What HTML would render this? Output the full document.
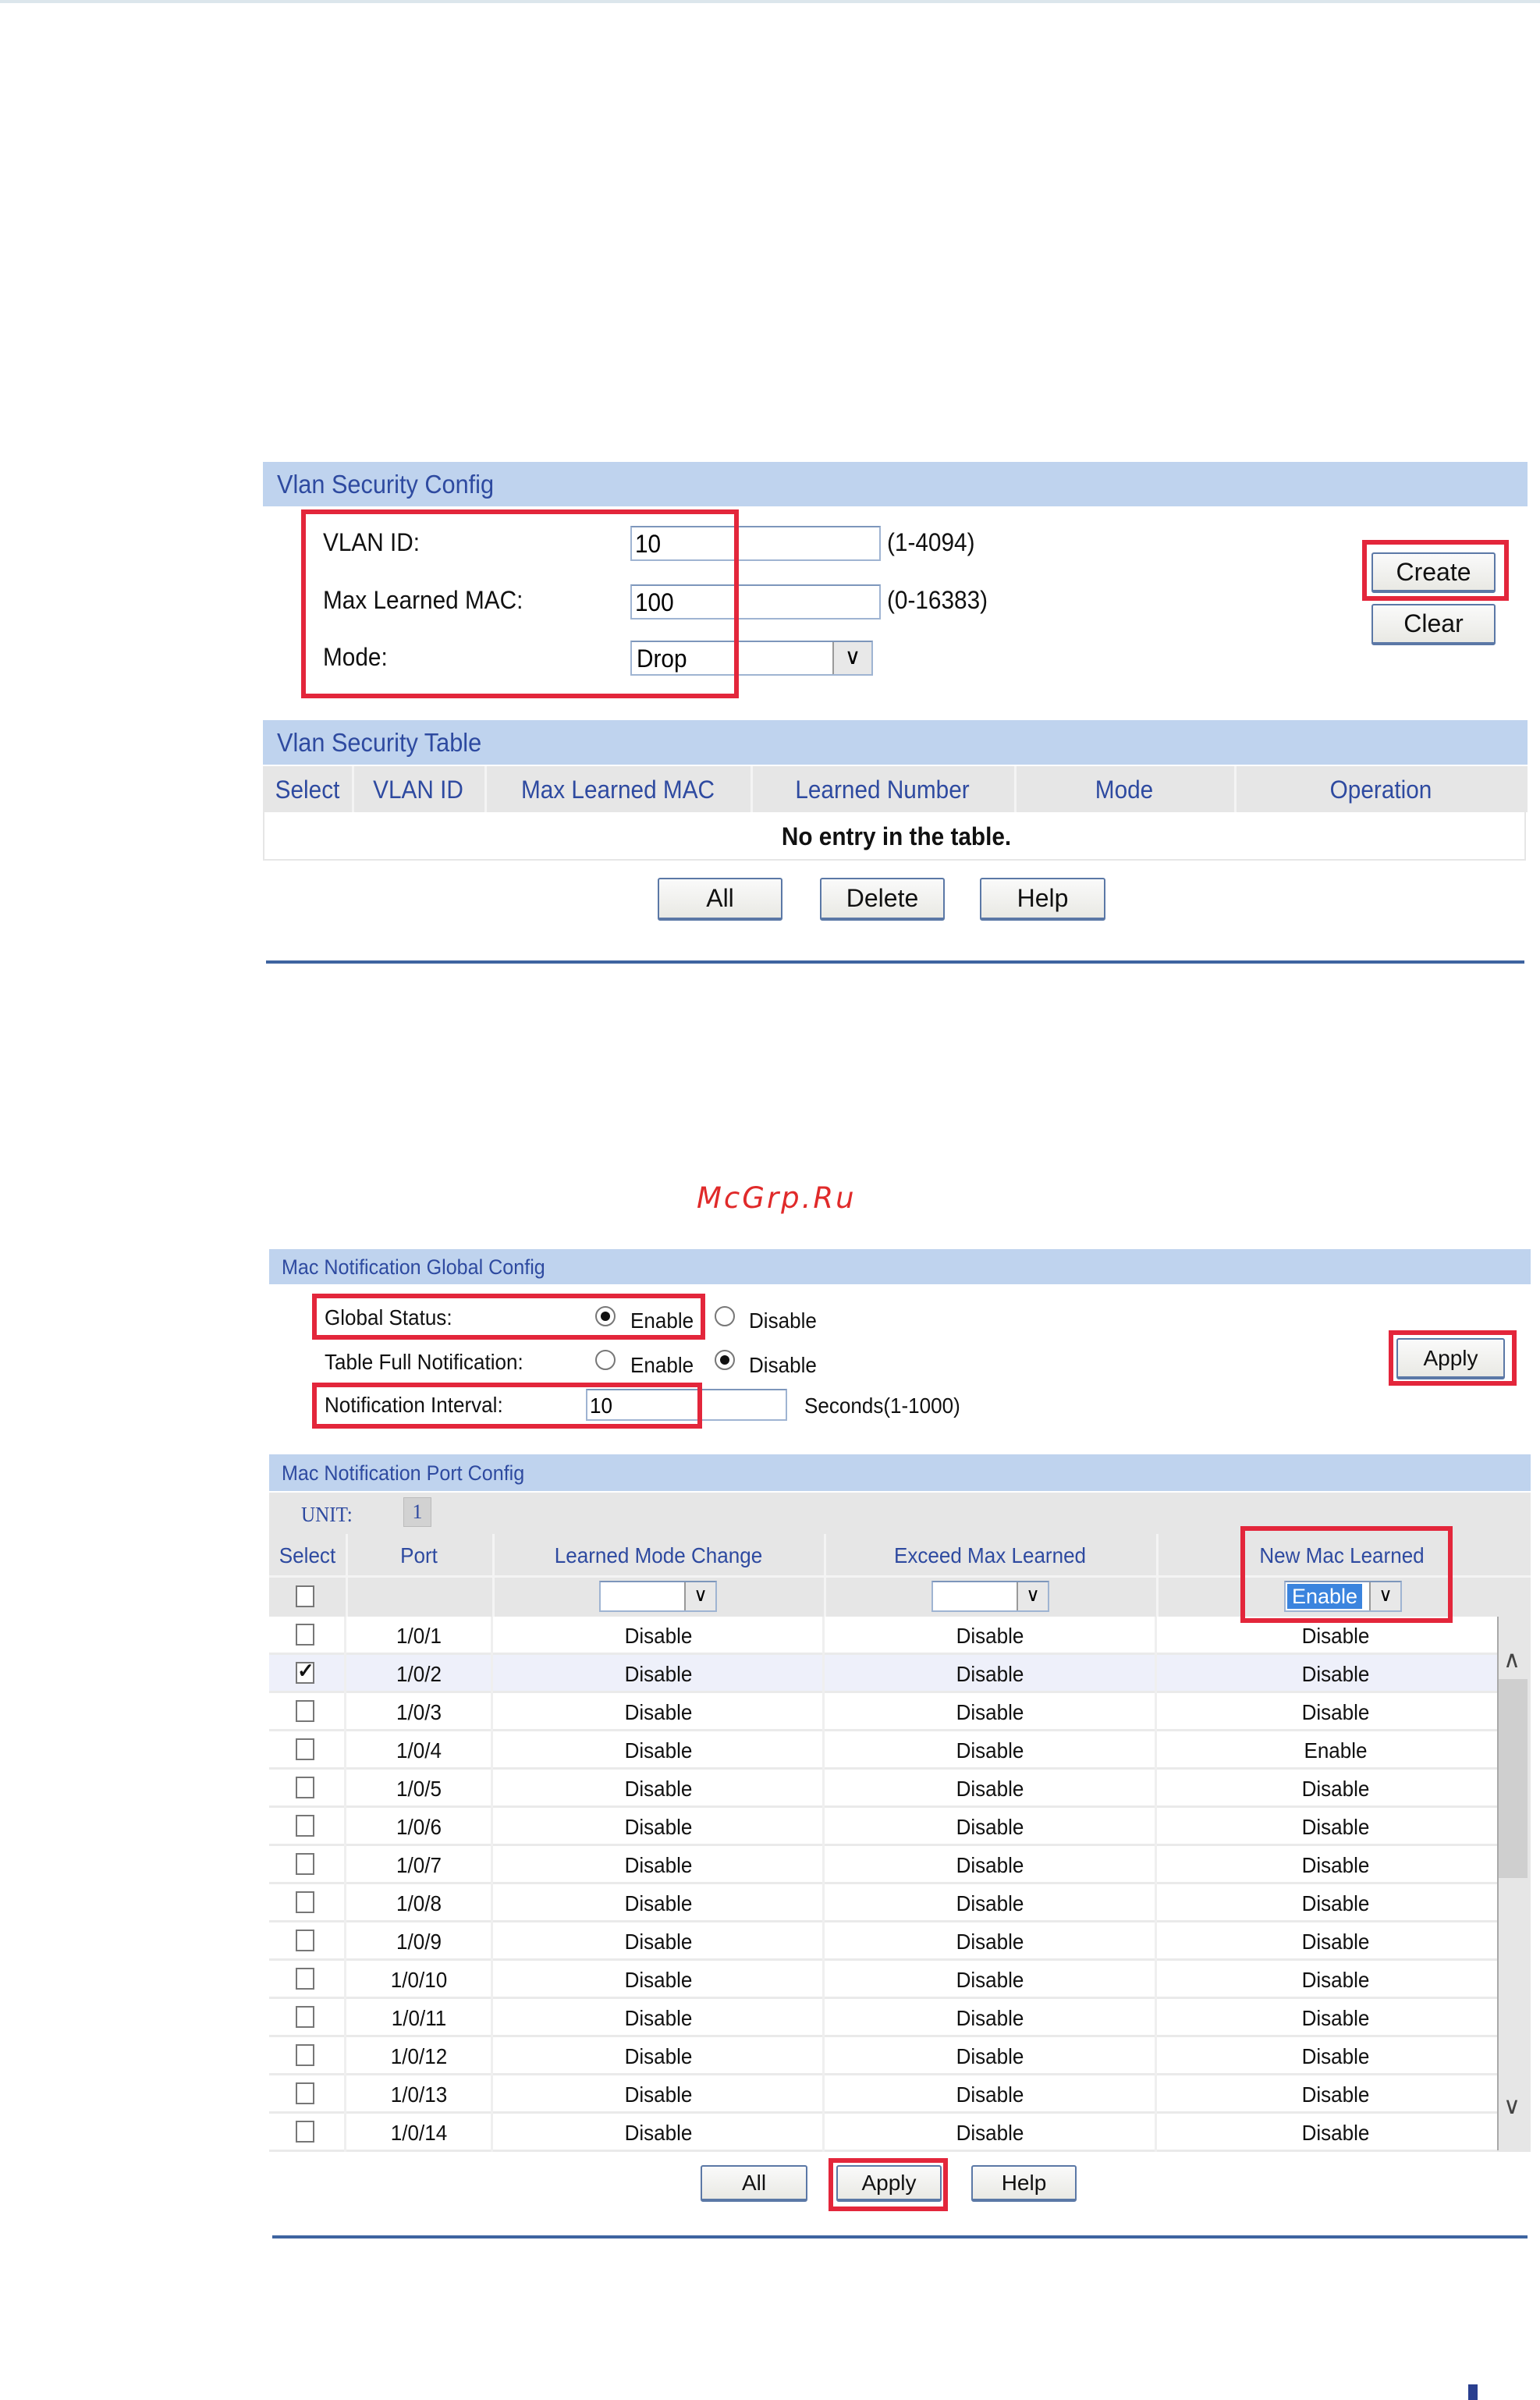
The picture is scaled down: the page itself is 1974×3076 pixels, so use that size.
<!DOCTYPE html>
<html><head><meta charset="utf-8"><style>
body{margin:0;width:1974px;height:3076px;background:#fff;position:relative;overflow:hidden;font-family:"Liberation Sans",Arial,sans-serif;}
.a{position:absolute;}
.hd{position:absolute;background:#bfd3ee;color:#2e4aa0;}
.t{position:absolute;white-space:nowrap;transform:scaleX(.93);transform-origin:left center;}
.tc{position:absolute;white-space:nowrap;transform:translateX(-50%) scaleX(.93);}
.red{position:absolute;border:6px solid #e3263b;box-sizing:border-box;z-index:5;}
.inp{position:absolute;background:#fff;border:2px solid #9fb4d2;border-top-color:#7d96bb;box-sizing:border-box;}
.btn{position:absolute;box-sizing:border-box;border:2px solid #5b78a6;border-bottom-width:4px;border-radius:3px;background:linear-gradient(#fafafa,#e9e9e4);color:#111;text-align:center;}
.sb{position:absolute;top:0;right:0;bottom:0;background:#e6e6e6;border-left:2px solid #a9a9a9;}
.cb{position:absolute;width:24px;height:28px;border:2px solid #777;box-sizing:border-box;background:#fff;}
.row{position:absolute;left:345px;width:1574px;height:49px;border-bottom:3px solid #eaeaea;box-sizing:border-box;font-size:28px;color:#111;}
</style></head><body>
<div class="a" style="left:0;top:0;width:1974px;height:4px;background:#dce6ec"></div>

<!-- Section 1 -->
<div class="hd" style="left:337px;top:592px;width:1621px;height:57px"><span class="t" style="left:18px;top:10px;font-size:33px">Vlan Security Config</span></div>
<div class="red" style="left:386px;top:653px;width:561px;height:242px"></div>
<span class="t" style="left:414px;top:677px;font-size:32px;color:#111">VLAN ID:</span>
<span class="t" style="left:414px;top:751px;font-size:32px;color:#111">Max Learned MAC:</span>
<span class="t" style="left:414px;top:824px;font-size:32px;color:#111">Mode:</span>
<div class="inp" style="left:808px;top:674px;width:321px;height:45px"><span class="t" style="left:4px;top:3px;font-size:32px">10</span></div>
<span class="t" style="left:1137px;top:677px;font-size:32px;color:#111">(1-4094)</span>
<div class="inp" style="left:808px;top:749px;width:321px;height:45px"><span class="t" style="left:4px;top:3px;font-size:32px">100</span></div>
<span class="t" style="left:1137px;top:751px;font-size:32px;color:#111">(0-16383)</span>
<div class="inp" style="left:808px;top:821px;width:311px;height:45px"><span class="t" style="left:6px;top:3px;font-size:32px">Drop</span>
<div class="a" style="right:0;top:0;width:50px;height:41px;background:#e8e8e8;border-left:2px solid #999;box-sizing:border-box;font-size:28px;text-align:center;line-height:38px">&#x2228;</div></div>
<div class="red" style="left:1746px;top:692px;width:188px;height:78px"></div>
<div class="btn" style="left:1758px;top:708px;width:159px;height:52px;font-size:32px;line-height:46px">Create</div>
<div class="btn" style="left:1758px;top:774px;width:159px;height:53px;font-size:32px;line-height:47px">Clear</div>

<div class="hd" style="left:337px;top:923px;width:1621px;height:57px"><span class="t" style="left:18px;top:10px;font-size:33px">Vlan Security Table</span></div>
<div class="a" style="left:337px;top:982px;width:1621px;height:59px;background:#e6e6e6;color:#2e4aa0;font-size:32px">
<div class="a" style="left:114px;top:0;width:3px;height:59px;background:#f4f4f4"></div>
<div class="a" style="left:284px;top:0;width:3px;height:59px;background:#f4f4f4"></div>
<div class="a" style="left:625px;top:0;width:3px;height:59px;background:#f4f4f4"></div>
<div class="a" style="left:963px;top:0;width:3px;height:59px;background:#f4f4f4"></div>
<div class="a" style="left:1245px;top:0;width:3px;height:59px;background:#f4f4f4"></div>
<span class="tc" style="left:57px;top:12px">Select</span>
<span class="tc" style="left:199px;top:12px">VLAN ID</span>
<span class="tc" style="left:455px;top:12px">Max Learned MAC</span>
<span class="tc" style="left:794px;top:12px">Learned Number</span>
<span class="tc" style="left:1104px;top:12px">Mode</span>
<span class="tc" style="left:1433px;top:12px">Operation</span>
</div>
<div class="a" style="left:337px;top:1041px;width:1619px;height:62px;border:2px solid #e6e6e6;border-top:none;box-sizing:border-box"><span class="tc" style="left:810px;top:13px;font-size:32px;font-weight:bold;color:#111">No entry in the table.</span></div>
<div class="btn" style="left:843px;top:1125px;width:160px;height:55px;font-size:32px;line-height:49px">All</div>
<div class="btn" style="left:1051px;top:1125px;width:160px;height:55px;font-size:32px;line-height:49px">Delete</div>
<div class="btn" style="left:1256px;top:1125px;width:161px;height:55px;font-size:32px;line-height:49px">Help</div>
<div class="a" style="left:341px;top:1231px;width:1613px;height:4px;background:#3e64a0"></div>

<div class="a" style="left:893px;top:1514px;font-family:'DejaVu Sans',sans-serif;font-style:italic;font-size:37px;letter-spacing:3px;color:#e02a2a">McGrp.Ru</div>

<!-- Section 3 -->
<div class="hd" style="left:345px;top:1601px;width:1617px;height:45px"><span class="t" style="left:16px;top:8px;font-size:27px">Mac Notification Global Config</span></div>
<div class="red" style="left:400px;top:1658px;width:504px;height:59px"></div>
<span class="t" style="left:416px;top:1673px;font-size:28px;color:#111">Global Status:</span>
<svg class="a" style="left:762px;top:1673px" width="28" height="28"><circle cx="14" cy="14" r="12" fill="#fff" stroke="#777" stroke-width="2"/><circle cx="14" cy="14" r="6" fill="#111"/></svg>
<span class="t" style="left:808px;top:1677px;font-size:28px;color:#111">Enable</span>
<svg class="a" style="left:915px;top:1673px" width="28" height="28"><circle cx="14" cy="14" r="12" fill="#fff" stroke="#777" stroke-width="2"/></svg>
<span class="t" style="left:960px;top:1677px;font-size:28px;color:#111">Disable</span>
<span class="t" style="left:416px;top:1730px;font-size:28px;color:#111">Table Full Notification:</span>
<svg class="a" style="left:762px;top:1729px" width="28" height="28"><circle cx="14" cy="14" r="12" fill="#fff" stroke="#777" stroke-width="2"/></svg>
<span class="t" style="left:808px;top:1734px;font-size:28px;color:#111">Enable</span>
<svg class="a" style="left:915px;top:1729px" width="28" height="28"><circle cx="14" cy="14" r="12" fill="#fff" stroke="#777" stroke-width="2"/><circle cx="14" cy="14" r="6" fill="#111"/></svg>
<span class="t" style="left:960px;top:1734px;font-size:28px;color:#111">Disable</span>
<div class="red" style="left:400px;top:1772px;width:500px;height:59px"></div>
<span class="t" style="left:416px;top:1785px;font-size:28px;color:#111">Notification Interval:</span>
<div class="inp" style="left:751px;top:1780px;width:258px;height:41px"><span class="t" style="left:3px;top:4px;font-size:28px">10</span></div>
<span class="t" style="left:1031px;top:1786px;font-size:28px;color:#111">Seconds(1-1000)</span>
<div class="red" style="left:1780px;top:1705px;width:164px;height:71px"></div>
<div class="btn" style="left:1790px;top:1715px;width:139px;height:53px;font-size:28px;line-height:47px">Apply</div>

<div class="hd" style="left:345px;top:1864px;width:1617px;height:47px"><span class="t" style="left:16px;top:9px;font-size:27px">Mac Notification Port Config</span></div>
<div class="a" style="left:345px;top:1913px;width:1617px;height:53px;background:#e6e6e6">
<span class="t" style="left:41px;top:13px;font-size:27px;color:#2e4aa0;font-family:'Liberation Serif',serif">UNIT:</span>
<div class="a" style="left:172px;top:6px;width:36px;height:38px;background:#d2d2d2;border:1px solid #bbb;box-sizing:border-box;text-align:center;font-family:'Liberation Serif',serif;font-size:26px;line-height:36px;color:#2e4aa0">1</div>
</div>
<div class="a" style="left:345px;top:1966px;width:1617px;height:53px;background:#e6e6e6;color:#2e4aa0;font-size:28px">
<span class="tc" style="left:49px;top:12px">Select</span>
<span class="tc" style="left:192px;top:12px">Port</span>
<span class="tc" style="left:499px;top:12px">Learned Mode Change</span>
<span class="tc" style="left:924px;top:12px">Exceed Max Learned</span>
<span class="tc" style="left:1375px;top:12px">New Mac Learned</span>
</div>
<div class="a" style="left:345px;top:2019px;width:1617px;height:53px;background:#e6e6e6;border-top:3px solid #f4f4f4;box-sizing:border-box">
<div class="cb" style="left:34px;top:10px"></div>
<div class="inp" style="left:423px;top:4px;width:151px;height:40px;background:#fff"><div class="a" style="right:0;top:0;width:40px;height:36px;background:#e8e8e8;border-left:2px solid #999;box-sizing:border-box;font-size:24px;text-align:center;line-height:34px">&#x2228;</div></div>
<div class="inp" style="left:849px;top:4px;width:151px;height:40px;background:#fff"><div class="a" style="right:0;top:0;width:40px;height:36px;background:#e8e8e8;border-left:2px solid #999;box-sizing:border-box;font-size:24px;text-align:center;line-height:34px">&#x2228;</div></div>
<div class="inp" style="left:1301px;top:4px;width:151px;height:40px;background:#fff"><div class="a" style="left:2px;top:2px;width:96px;height:32px;background:#3b84de;color:#fff;font-size:27px;line-height:32px;text-align:center">Enable</div><div class="a" style="right:0;top:0;width:40px;height:36px;background:#e8e8e8;border-left:2px solid #999;box-sizing:border-box;font-size:24px;text-align:center;line-height:34px">&#x2228;</div></div>
</div>
<div class="a" style="left:443px;top:1966px;width:3px;height:106px;background:#f4f4f4"></div>
<div class="a" style="left:631px;top:1966px;width:3px;height:106px;background:#f4f4f4"></div>
<div class="a" style="left:1056px;top:1966px;width:3px;height:106px;background:#f4f4f4"></div>
<div class="a" style="left:1482px;top:1966px;width:3px;height:106px;background:#f4f4f4"></div>
<div class="red" style="left:1590px;top:1956px;width:272px;height:124px"></div>

<div class="a" style="left:345px;top:2072px;width:1617px;height:686px;border:2px solid #e6e6e6;border-top:none;box-sizing:border-box">
<div class="sb" style="width:39px"><div class="a" style="left:6px;top:38px;font-size:30px;color:#444">&#x2227;</div><div class="a" style="left:0;top:80px;width:37px;height:255px;background:#cfcfcf"></div><div class="a" style="left:6px;top:610px;font-size:30px;color:#444">&#x2228;</div></div>
</div>
<div id="rows"></div>
<script>
(function(){var h='';var n=['Disable','Disable','Disable','Enable','Disable','Disable','Disable','Disable','Disable','Disable','Disable','Disable','Disable','Disable'];
for(var i=0;i<14;i++){var yy=2072+i*49;var bg=i==1?'#eef0fa':'#fff';
h+='<div class="row" style="top:'+yy+'px;background:'+bg+'">'+
'<div class="a" style="left:96px;top:0;width:3px;height:49px;background:#efefef"></div><div class="a" style="left:284px;top:0;width:3px;height:49px;background:#efefef"></div><div class="a" style="left:709px;top:0;width:3px;height:49px;background:#efefef"></div><div class="a" style="left:1135px;top:0;width:3px;height:49px;background:#efefef"></div>'+
'<div class="cb" style="left:34px;top:9px">'+(i==1?'<span class="a" style="left:0;top:-6px;font-size:26px;font-weight:bold;color:#111">&#x2713;</span>':'')+'</div>'+
'<span class="tc" style="left:192px;top:9px">1/0/'+(i+1)+'</span>'+
'<span class="tc" style="left:499px;top:9px">Disable</span>'+
'<span class="tc" style="left:924px;top:9px">Disable</span>'+
'<span class="tc" style="left:1367px;top:9px">'+n[i]+'</span></div>';}
document.getElementById('rows').innerHTML=h;})();
</script>

<div class="btn" style="left:898px;top:2775px;width:137px;height:47px;font-size:28px;line-height:41px">All</div>
<div class="red" style="left:1062px;top:2766px;width:153px;height:68px"></div>
<div class="btn" style="left:1072px;top:2775px;width:135px;height:47px;font-size:28px;line-height:41px">Apply</div>
<div class="btn" style="left:1245px;top:2775px;width:135px;height:47px;font-size:28px;line-height:41px">Help</div>
<div class="a" style="left:349px;top:2865px;width:1609px;height:4px;background:#3e64a0"></div>
<div class="a" style="left:1882px;top:3056px;width:12px;height:20px;background:#2a3f8f"></div>
</body></html>
